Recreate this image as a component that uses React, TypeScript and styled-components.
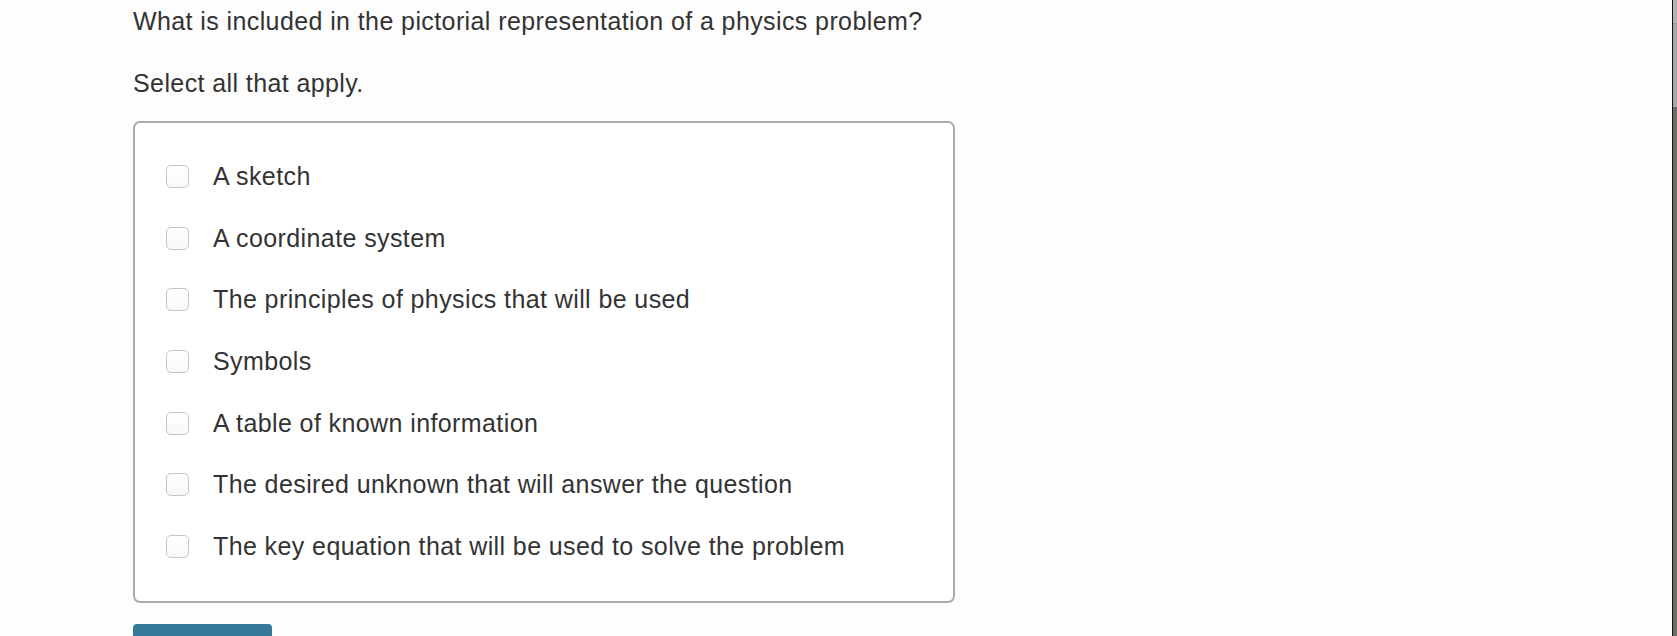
import styled, { createGlobalStyle } from 'styled-components';

const GlobalStyle = createGlobalStyle`
  html, body {
    margin: 0;
    padding: 0;
    height: 100%;
    overflow: hidden;
    background: #ffffff;
  }
  body {
    font-family: "Liberation Sans", Arial, Helvetica, sans-serif;
    color: #333333;
  }
`;

const options = [
  'A sketch',
  'A coordinate system',
  'The principles of physics that will be used',
  'Symbols',
  'A table of known information',
  'The desired unknown that will answer the question',
  'The key equation that will be used to solve the problem',
];

const Frame = styled.div`
  display: flex;
  height: 636px;
  overflow: hidden;
`;

const Main = styled.main`
  flex: 1;
  padding: 5px 0 0 133px;
  background: #fdfdfd;
`;

const EdgeStrip = styled.div`
  width: 4px;
  border-left: 1px solid #141414;
  display: flex;
  flex-direction: column;
`;

const EdgeTop = styled.div`
  height: 23px;
  background: #b4b4b4;
  border-bottom: 1px solid #9a9a9a;
`;

const EdgeThumb = styled.div`
  height: 83px;
  background: #a9a9a9;
`;

const EdgeRest = styled.div`
  flex: 1;
  background: #6f6c68;
`;

const Prompt = styled.p`
  margin: 0;
  font-size: 25px;
  line-height: 32px;
  letter-spacing: 0.4px;
`;

const Instruction = styled(Prompt)`
  margin-top: 30px;
`;

const OptionBox = styled.div`
  width: 822px;
  box-sizing: border-box;
  margin-top: 22px;
  padding: 23px 31px 24px;
  border: 2px solid #ababab;
  border-radius: 7px;
  background: #ffffff;
  display: flex;
  flex-direction: column;
`;

const OptionRow = styled.label`
  display: flex;
  align-items: center;
  gap: 24px;
  height: 61.6px;
  font-size: 25px;
  letter-spacing: 0.4px;
  cursor: pointer;
`;

const Check = styled.input.attrs({ type: 'checkbox' })`
  appearance: none;
  margin: 0;
  flex: none;
  width: 23px;
  height: 23px;
  box-sizing: border-box;
  border: 1px solid #c6c6c6;
  border-radius: 5px;
  background: linear-gradient(#ffffff, #f8f8f8);
`;

const SubmitButton = styled.button`
  display: block;
  margin-top: 21px;
  width: 139px;
  height: 40px;
  border: none;
  border-radius: 4px;
  background: #35799b;
  color: #ffffff;
  font-family: inherit;
  font-size: 20px;
`;

export default function App() {
  return (
    <>
      <GlobalStyle />
      <Frame>
        <Main>
          <Prompt>What is included in the pictorial representation of a physics problem?</Prompt>
          <Instruction>Select all that apply.</Instruction>
          <OptionBox>
            {options.map((text) => (
              <OptionRow key={text}>
                <Check />
                <span>{text}</span>
              </OptionRow>
            ))}
          </OptionBox>
          <SubmitButton aria-label="Submit" />
        </Main>
        <EdgeStrip>
          <EdgeTop />
          <EdgeThumb />
          <EdgeRest />
        </EdgeStrip>
      </Frame>
    </>
  );
}
